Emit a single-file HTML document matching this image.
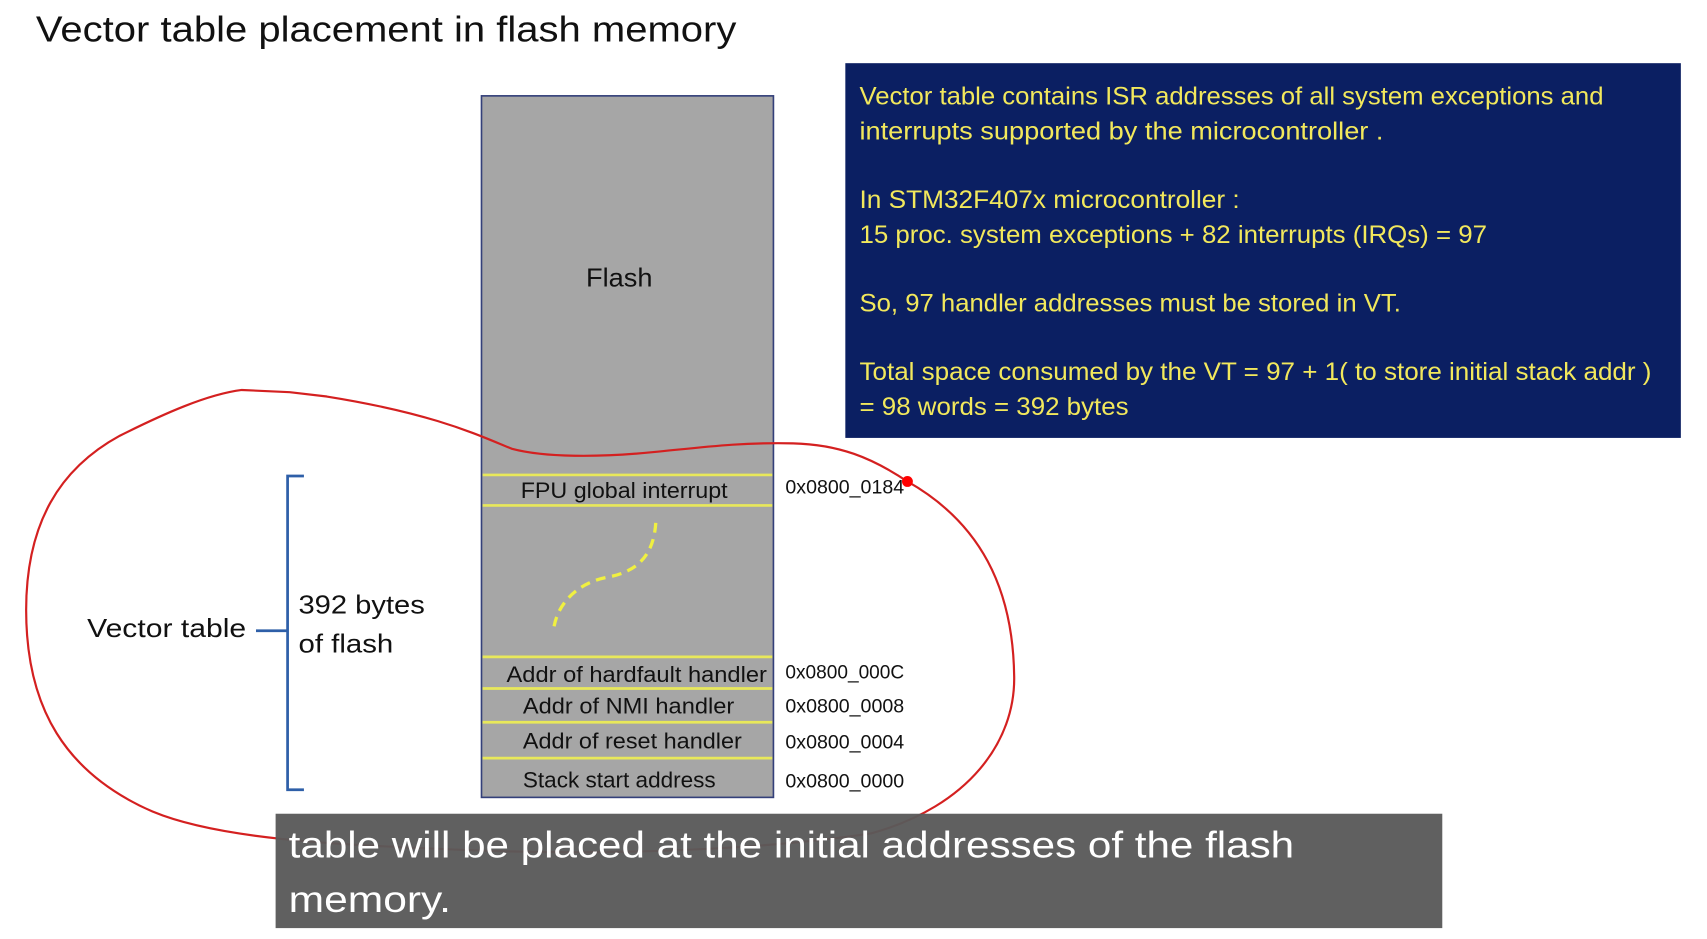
<!DOCTYPE html>
<html><head><meta charset="utf-8"><style>
html,body{margin:0;padding:0;background:#fff;width:1707px;height:939px;overflow:hidden}
svg{display:block}
text{font-family:"Liberation Sans",sans-serif}
</style></head><body>
<svg width="1707" height="939" viewBox="0 0 1567 862" preserveAspectRatio="none" xmlns="http://www.w3.org/2000/svg">
<rect width="1567" height="862" fill="#fff"/>
<text x="33" y="38" font-size="33" fill="#111" textLength="643" lengthAdjust="spacingAndGlyphs">Vector table placement in flash memory</text>

<rect x="776" y="58" width="767" height="344" fill="#0b1f62"/>
<g fill="#f2e85c" font-size="22.5">
<text x="789" y="96" textLength="683" lengthAdjust="spacingAndGlyphs">Vector table contains ISR addresses of all system exceptions and</text>
<text x="789" y="128" textLength="481" lengthAdjust="spacingAndGlyphs">interrupts supported by the microcontroller .</text>
<text x="789" y="191" textLength="349" lengthAdjust="spacingAndGlyphs">In STM32F407x microcontroller :</text>
<text x="789" y="223" textLength="576" lengthAdjust="spacingAndGlyphs">15 proc. system exceptions + 82 interrupts (IRQs) = 97</text>
<text x="789" y="286" textLength="497" lengthAdjust="spacingAndGlyphs">So, 97 handler addresses must be stored in VT.</text>
<text x="789" y="349" textLength="727" lengthAdjust="spacingAndGlyphs">Total space consumed by the VT = 97 + 1( to store initial stack addr )</text>
<text x="789" y="381" textLength="247" lengthAdjust="spacingAndGlyphs">= 98 words = 392 bytes</text>
</g>

<rect x="442" y="88" width="268" height="644" fill="#a6a6a6" stroke="#34407a" stroke-width="1.5"/>
<g stroke="#e8e85a" stroke-width="2.5">
<line x1="443" y1="436" x2="709" y2="436"/>
<line x1="443" y1="464" x2="709" y2="464"/>
<line x1="443" y1="603" x2="709" y2="603"/>
<line x1="443" y1="632" x2="709" y2="632"/>
<line x1="443" y1="663" x2="709" y2="663"/>
<line x1="443" y1="696" x2="709" y2="696"/>
</g>
<path d="M602,480 C600,510 585,525 557,530 C530,535 510,555 508,580" fill="none" stroke="#f0f040" stroke-width="3" stroke-dasharray="9,6"/>
<g fill="#111" font-size="20">
<text x="538" y="263" font-size="24" textLength="61" lengthAdjust="spacingAndGlyphs">Flash</text>
<text x="478" y="457" textLength="190" lengthAdjust="spacingAndGlyphs">FPU global interrupt</text>
<text x="465" y="626" textLength="239" lengthAdjust="spacingAndGlyphs">Addr of hardfault handler</text>
<text x="480" y="655" textLength="194" lengthAdjust="spacingAndGlyphs">Addr of NMI handler</text>
<text x="480" y="687" textLength="201" lengthAdjust="spacingAndGlyphs">Addr of reset handler</text>
<text x="480" y="723" textLength="177" lengthAdjust="spacingAndGlyphs">Stack start address</text>
</g>
<g fill="#111" font-size="17.5">
<text x="721" y="453" textLength="109" lengthAdjust="spacingAndGlyphs">0x0800_0184</text>
<text x="721" y="623" textLength="109" lengthAdjust="spacingAndGlyphs">0x0800_000C</text>
<text x="721" y="654" textLength="109" lengthAdjust="spacingAndGlyphs">0x0800_0008</text>
<text x="721" y="687" textLength="109" lengthAdjust="spacingAndGlyphs">0x0800_0004</text>
<text x="721" y="723" textLength="109" lengthAdjust="spacingAndGlyphs">0x0800_0000</text>
</g>

<path d="M279,437 L264,437 L264,725 L279,725 M264,579 L235,579" fill="none" stroke="#2e5fa8" stroke-width="2.5"/>
<g fill="#111" font-size="24">
<text x="80" y="585" textLength="146" lengthAdjust="spacingAndGlyphs">Vector table</text>
<text x="274" y="563" textLength="116" lengthAdjust="spacingAndGlyphs">392 bytes</text>
<text x="274" y="599" textLength="87" lengthAdjust="spacingAndGlyphs">of flash</text>
</g>

<path d="M266,360 L222,358 C190,362 150,380 110,400 C55,430 24,480 24,560 C24,650 60,710 140,745 C200,770 300,775 420,780 C560,786 700,780 800,765 C890,740 932,680 931,621 C930,540 900,480 833,442 C800,420 770,408 728,407 C680,406 650,410 600,415 C550,420 500,420 470,412 C440,400 400,380 300,364 Z" fill="none" stroke="#d42020" stroke-width="2"/>
<circle cx="833" cy="442" r="5" fill="#f00"/>

<rect x="253" y="747" width="1071" height="105" fill="#5a5a5a" fill-opacity="0.96"/>
<g fill="#fff" font-size="34">
<text x="265" y="787" textLength="923" lengthAdjust="spacingAndGlyphs">table will be placed at the initial addresses of the flash</text>
<text x="265" y="837" textLength="149" lengthAdjust="spacingAndGlyphs">memory.</text>
</g>
</svg>
</body></html>
